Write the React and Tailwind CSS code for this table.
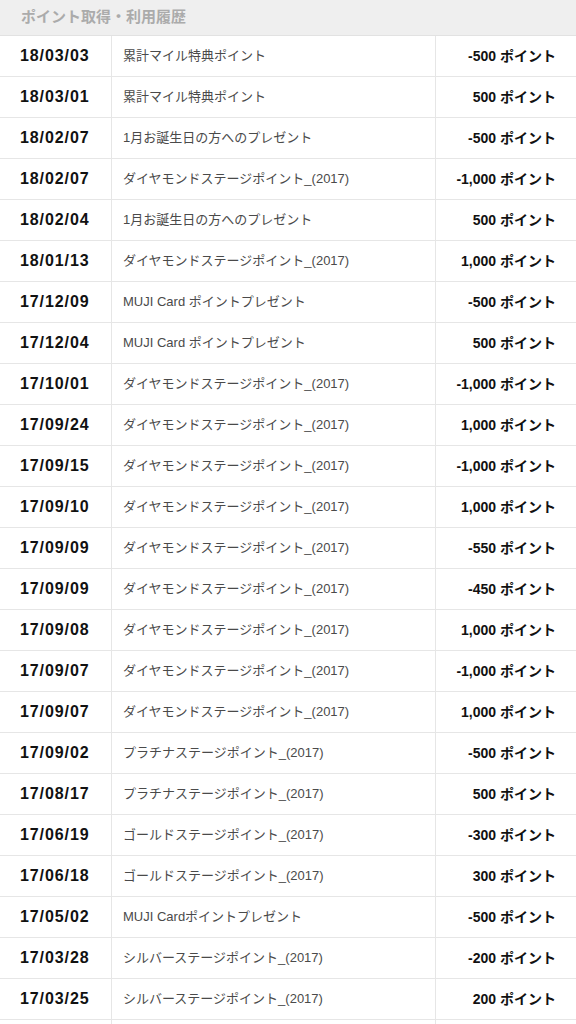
const rows = [
  ['18/03/03', '累計マイル特典ポイント', '-500'],
  ['18/03/01', '累計マイル特典ポイント', '500'],
  ['18/02/07', '1月お誕生日の方へのプレゼント', '-500'],
  ['18/02/07', 'ダイヤモンドステージポイント_(2017)', '-1,000'],
  ['18/02/04', '1月お誕生日の方へのプレゼント', '500'],
  ['18/01/13', 'ダイヤモンドステージポイント_(2017)', '1,000'],
  ['17/12/09', 'MUJI Card ポイントプレゼント', '-500'],
  ['17/12/04', 'MUJI Card ポイントプレゼント', '500'],
  ['17/10/01', 'ダイヤモンドステージポイント_(2017)', '-1,000'],
  ['17/09/24', 'ダイヤモンドステージポイント_(2017)', '1,000'],
  ['17/09/15', 'ダイヤモンドステージポイント_(2017)', '-1,000'],
  ['17/09/10', 'ダイヤモンドステージポイント_(2017)', '1,000'],
  ['17/09/09', 'ダイヤモンドステージポイント_(2017)', '-550'],
  ['17/09/09', 'ダイヤモンドステージポイント_(2017)', '-450'],
  ['17/09/08', 'ダイヤモンドステージポイント_(2017)', '1,000'],
  ['17/09/07', 'ダイヤモンドステージポイント_(2017)', '-1,000'],
  ['17/09/07', 'ダイヤモンドステージポイント_(2017)', '1,000'],
  ['17/09/02', 'プラチナステージポイント_(2017)', '-500'],
  ['17/08/17', 'プラチナステージポイント_(2017)', '500'],
  ['17/06/19', 'ゴールドステージポイント_(2017)', '-300'],
  ['17/06/18', 'ゴールドステージポイント_(2017)', '300'],
  ['17/05/02', 'MUJI Cardポイントプレゼント', '-500'],
  ['17/03/28', 'シルバーステージポイント_(2017)', '-200'],
  ['17/03/25', 'シルバーステージポイント_(2017)', '200'],
];

const font = { fontFamily: '"Liberation Sans", "Noto Sans CJK JP", sans-serif' };

export default function App() {
  return (
    <div className="w-[576px] h-[1024px] overflow-hidden bg-white" style={font}>
      {/* Header */}
      <div className="h-[36px] flex items-center px-[21px] bg-[#efefef] border-b border-[#e2e2e2]">
        <span className="text-[15px] font-bold text-[#ababab]">ポイント取得・利用履歴</span>
      </div>

      {rows.map((r, i) => (
        <div key={i} className="flex h-[41px] border-b border-[#e6e6e6]">
          <div className="w-[112px] shrink-0 flex items-center pl-[20px] border-r border-[#e6e6e6]">
            <span className="text-[16px] font-bold text-[#111] tracking-[0.9px]">{r[0]}</span>
          </div>
          <div className="w-[324px] shrink-0 flex items-center pl-[11px] border-r border-[#e6e6e6]">
            <span className="text-[13px] text-[#4a4a4a]">{r[1]}</span>
          </div>
          <div className="flex-1 flex items-center justify-end pr-[20px]">
            <span className="text-[14px] font-bold text-[#111]">{r[2]} ポイント</span>
          </div>
        </div>
      ))}

      {/* next row, cut off at the bottom */}
      <div className="flex h-[41px]">
        <div className="w-[112px] shrink-0 border-r border-[#e6e6e6]" />
        <div className="w-[324px] shrink-0 border-r border-[#e6e6e6]" />
        <div className="flex-1" />
      </div>
    </div>
  );
}
